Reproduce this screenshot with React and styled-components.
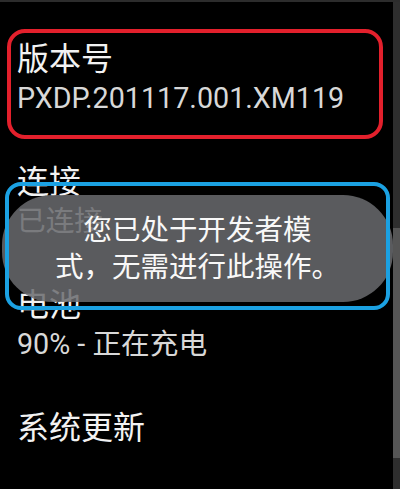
import React from 'react';
import styled, { createGlobalStyle } from 'styled-components';

const Global = createGlobalStyle`
  html, body { margin: 0; padding: 0; background: #000; }
  body {
    width: 400px;
    height: 489px;
    overflow: hidden;
    font-family: Roboto, "Noto Sans CJK SC", sans-serif;
    -webkit-font-smoothing: antialiased;
  }
`;

const Screen = styled.div`
  position: relative;
  width: 400px;
  height: 489px;
  box-sizing: border-box;
  border-top: 2px solid #2c2c2c;
  background: #000;
  display: flex;
  overflow: hidden;
`;

const List = styled.div`
  flex: 1;
  padding-top: 13px;
  display: flex;
  flex-direction: column;
`;

const Item = styled.div`
  padding: 23px 17px 22px;
  display: flex;
  flex-direction: column;
`;

const Title = styled.div`
  font-size: 32px;
  line-height: 42px;
  color: #f2f2f2;
  white-space: nowrap;
`;

const Summary = styled.div`
  font-size: 28.7px;
  line-height: 36px;
  color: #d8d8d8;
  white-space: nowrap;
`;

const Track = styled.div`
  width: 7px;
  background: #2e2e2e;
  display: flex;
  flex-direction: column;
`;

const Thumb = styled.div`
  margin-top: 226px;
  height: 230px;
  background: #555;
`;

const Toast = styled.div`
  position: absolute;
  left: 2px;
  top: 193px;
  width: 391px;
  height: 107px;
  box-sizing: border-box;
  border-radius: 50px;
  background: rgba(106, 107, 110, 0.85);
  display: flex;
  align-items: center;
  justify-content: center;
  text-align: center;
  color: #f8f8f8;
  font-size: 28.5px;
  line-height: 37px;
`;

const VersionHighlight = styled.div`
  position: absolute;
  left: 7px;
  top: 27px;
  width: 376px;
  height: 110px;
  box-sizing: border-box;
  border: 4px solid #e3202c;
  border-radius: 18px;
  pointer-events: none;
`;

const ToastHighlight = styled.div`
  position: absolute;
  left: 5px;
  top: 180px;
  width: 385px;
  height: 128px;
  box-sizing: border-box;
  border: 4px solid #1ba1e2;
  border-radius: 16px;
  pointer-events: none;
`;

const items = [
  { title: '版本号', summary: 'PXDP.201117.001.XM119' },
  { title: '连接', summary: '已连接' },
  { title: '电池', summary: '90% - 正在充电' },
  { title: '系统更新' },
];

export default function App() {
  return (
    <>
      <Global />
      <Screen>
        <List>
          {items.map((it) => (
            <Item key={it.title}>
              <Title>{it.title}</Title>
              {it.summary && <Summary>{it.summary}</Summary>}
            </Item>
          ))}
        </List>
        <Track>
          <Thumb />
        </Track>
        <VersionHighlight />
        <Toast>
          您已处于开发者模
          <br />
          式，无需进行此操作。
        </Toast>
        <ToastHighlight />
      </Screen>
    </>
  );
}
